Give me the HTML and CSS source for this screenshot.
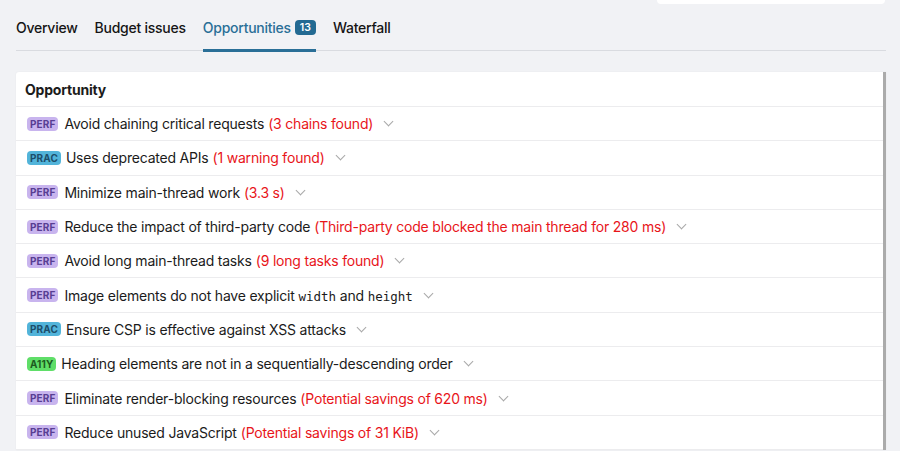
FILE: index.html
```html
<!DOCTYPE html>
<html>
<head>
<meta charset="utf-8">
<link rel="stylesheet" href="styles.css">
</head>
<body>
<div class="page">
  <div class="topbar"><div class="search-stub"></div></div>
  <nav class="tabs">
    <div class="tab">Overview</div>
    <div class="tab">Budget issues</div>
    <div class="tab active">Opportunities <span class="count">13</span></div>
    <div class="tab">Waterfall</div>
  </nav>
  <section class="card">
    <div class="card-head">Opportunity</div>
    <div class="row"><span class="tag perf">PERF</span><span class="title">Avoid chaining critical requests</span><span class="meta">(3 chains found)</span><span class="chev"></span></div>
    <div class="row"><span class="tag prac">PRAC</span><span class="title">Uses deprecated APIs</span><span class="meta">(1 warning found)</span><span class="chev"></span></div>
    <div class="row"><span class="tag perf">PERF</span><span class="title">Minimize main-thread work</span><span class="meta">(3.3 s)</span><span class="chev"></span></div>
    <div class="row"><span class="tag perf">PERF</span><span class="title">Reduce the impact of third-party code</span><span class="meta">(Third-party code blocked the main thread for 280 ms)</span><span class="chev"></span></div>
    <div class="row"><span class="tag perf">PERF</span><span class="title">Avoid long main-thread tasks</span><span class="meta">(9 long tasks found)</span><span class="chev"></span></div>
    <div class="row"><span class="tag perf">PERF</span><span class="title">Image elements do not have explicit <code>width</code> and <code>height</code></span><span class="chev"></span></div>
    <div class="row"><span class="tag prac">PRAC</span><span class="title">Ensure CSP is effective against XSS attacks</span><span class="chev"></span></div>
    <div class="row"><span class="tag a11y">A11Y</span><span class="title">Heading elements are not in a sequentially-descending order</span><span class="chev"></span></div>
    <div class="row"><span class="tag perf">PERF</span><span class="title">Eliminate render-blocking resources</span><span class="meta">(Potential savings of 620 ms)</span><span class="chev"></span></div>
    <div class="row"><span class="tag perf">PERF</span><span class="title">Reduce unused JavaScript</span><span class="meta">(Potential savings of 31 KiB)</span><span class="chev"></span></div>
  </section>
</div>
</body>
</html>
```

FILE: styles.css
```css
* { box-sizing: border-box; }
html, body { margin: 0; padding: 0; }
body {
  background: #f1f2f5;
  font-family: Inter, "Noto Sans", "Liberation Sans", sans-serif;
  color: #1b1b1b;
  overflow: hidden;
  height: 451px;
}
.page {
  padding: 0 14px 0 16px;
}
.topbar {
  display: flex;
  justify-content: flex-end;
  height: 4px;
}
.search-stub {
  width: 228px;
  height: 4px;
  background: #fff;
  border-radius: 0 0 5px 5px;
  margin-right: 1px;
}
.tabs {
  display: flex;
  gap: 17px;
  border-bottom: 1.5px solid #d9dbe0;
  height: 47px;
  align-items: stretch;
}
.tab {
  display: flex;
  align-items: center;
  gap: 4px;
  font-size: 14px;
  font-weight: 500;
  letter-spacing: -0.25px;
  color: #151515;
  padding-top: 2px;
  border-bottom: 3px solid transparent;
  margin-bottom: -2px;
}
.tab.active {
  color: #2a6f97;
  border-bottom-color: #2a6f97;
}
.count {
  display: inline-flex;
  align-items: center;
  justify-content: center;
  background: #236a92;
  color: #fff;
  font-size: 10.5px;
  font-weight: 600;
  letter-spacing: 0;
  height: 15px;
  padding: 0 5px;
  border-radius: 4px;
}
.card {
  margin-top: 21px;
  background: #fff;
  border-right: 3.5px solid #ababab;
  border-radius: 3px 0 0 0;
  box-shadow: 0 0 2px rgba(0,0,0,0.05);
}
.card-head {
  height: 35px;
  display: flex;
  align-items: center;
  padding-left: 9px;
  font-weight: 700;
  font-size: 14px;
  letter-spacing: -0.2px;
  border-bottom: 1px solid #ececee;
}
.row {
  height: 34.3px;
  display: flex;
  align-items: center;
  padding-left: 11px;
  font-size: 14px;
  letter-spacing: -0.2px;
  border-bottom: 1px solid #ececee;
}
.tag {
  font-size: 10px;
  font-weight: 700;
  letter-spacing: 0.1px;
  height: 14px;
  padding: 0 3px;
  border-radius: 4px;
  display: inline-flex;
  align-items: center;
  margin-right: 6px;
}
.tag.perf { background: #c8b4ee; color: #583e93; }
.tag.prac { background: #52b4da; color: #1c4e6b; padding: 0 3px; margin-right: 5px; }
.tag.a11y { background: #5fde68; color: #1c5a20; padding: 0 3px; margin-right: 5px; }
.title { white-space: nowrap; }
.title code {
  font-family: "DejaVu Sans Mono", "Liberation Mono", monospace;
  font-size: 12.5px;
  letter-spacing: 0;
}
.meta {
  color: #e8151a;
  margin-left: 4px;
  white-space: nowrap;
}
.chev {
  width: 7px;
  height: 7px;
  border-right: 1.5px solid #a8a8a8;
  border-bottom: 1.5px solid #a8a8a8;
  transform: rotate(45deg);
  margin-left: 12px;
  margin-top: -4px;
}
```
